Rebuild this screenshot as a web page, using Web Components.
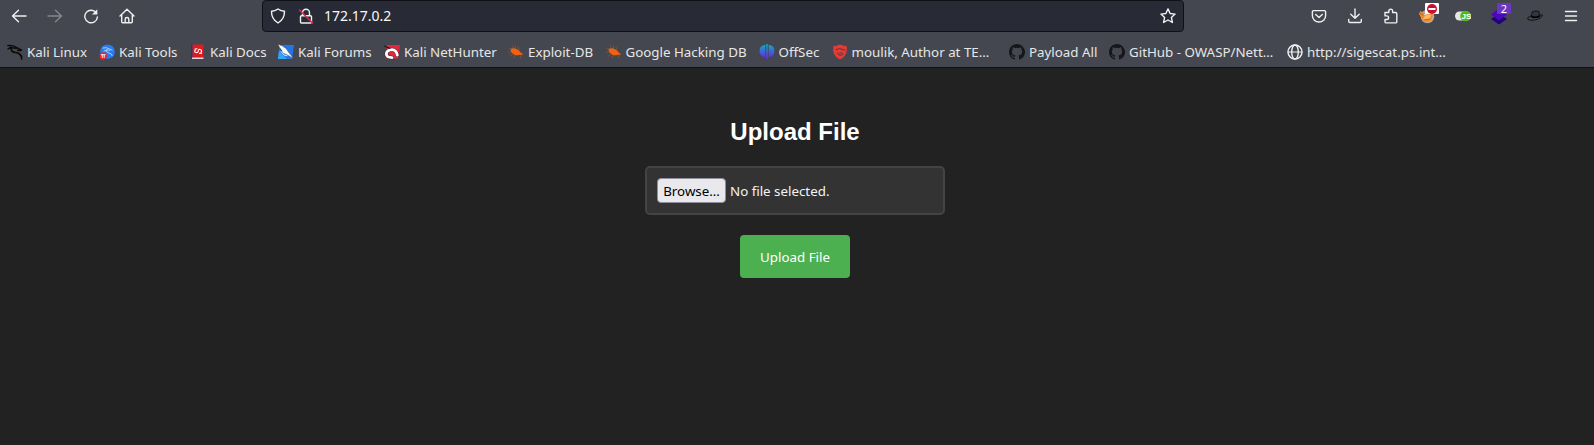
<!DOCTYPE html>
<html lang="en"><head><meta charset="utf-8"><title>Upload File</title>
<style>
html,body{margin:0;height:100%;background:#222;overflow:hidden}
body{font-family:"Noto Sans",sans-serif;font-size:13.333px;color:#e6e6e6}
</style></head><body>
<browser-window></browser-window>
<script>
const S=(w,h,b,vb)=>`<svg width="${w}" height="${h}" viewBox="${vb||`0 0 ${w} ${h}`}" fill="none" stroke="#f0f0f1" stroke-width="1.4" stroke-linecap="round" stroke-linejoin="round">${b}</svg>`;
const bug=S(16,16,'<g stroke="#b85a2a" stroke-width=".5"><path d="M4 1.500l2 3M7.500 2v3M1 4.500l4 1.500M.5 8h4M2.500 12l3-2.500M6 13.500l2-3M10 3l1 2.500M12.500 13.500l.5-3.500M15 10l-3-1"/></g><path d="M2.500 5Q5 3.700 8.500 5Q12 6.500 12.700 8.500l2.300 2.300-3-.1Q8 12.300 5 9.800Q2.500 8 2.500 5z" fill="#f0620f" stroke="none"/>');
const cat=S(16,16,'<path fill="#16171a" stroke="none" fill-rule="evenodd" d="M8 0C3.580 0 0 3.580 0 8c0 3.540 2.290 6.530 5.470 7.590.4.070.55-.17.55-.38 0-.19-.01-.82-.01-1.490-2.010.37-2.530-.49-2.690-.94-.09-.23-.48-.94-.82-1.130-.28-.15-.68-.52-.01-.53.63-.01 1.080.58 1.230.82.72 1.210 1.870.87 2.330.66.07-.52.28-.87.51-1.070-1.780-.2-3.640-.89-3.640-3.950 0-.87.31-1.590.82-2.150-.08-.2-.36-1.020.08-2.120 0 0 .67-.21 2.200.82a7.600 7.600 0 0 1 4 0c1.530-1.040 2.200-.82 2.200-.82.44 1.100.16 1.920.08 2.120.51.56.82 1.270.82 2.150 0 3.070-1.870 3.750-3.650 3.950.29.25.54.73.54 1.480 0 1.070-.01 1.930-.01 2.200 0 .21.15.46.55.38A8 8 0 0 0 8 0z"/>');
const ICONS={
back:S(16,16,'<path d="M15 8H1.500M7.500 2.300L1.500 8l6 5.700"/>'),
fwd:S(16,16,'<path stroke="#85868c" d="M1 8h13.500M8.500 2.300l6 5.700-6 5.700"/>'),
reload:S(16,16,'<path d="M13.500 5.200A6.300 6.300 0 1 0 14.400 9"/><path d="M14.300 1.200v5.300H9z" fill="#f0f0f1" stroke="none"/>'),
home:S(16,16,'<path d="M1 8L8 1.300 15 8M2.700 6.800v7q0 1 1 1h8.600q1 0 1-1v-7M6.200 14.700v-3.500q0-1.700 1.800-1.700t1.800 1.700v3.500"/>'),
shield:S(16,16,'<path d="M8 1Q11 3 14.500 3.300Q14.700 11 8 15Q1.300 11 1.500 3.300Q5 3 8 1z"/>'),
lock:S(16,16,'<path d="M4.500 7.500V4.700a3.500 3.500 0 0 1 7 0v2.800M3.500 7.700h9q1 0 1 1v5.300q0 1-1 1h-9q-1 0-1-1V8.700q0-1 1-1z"/><path stroke="#e22850" stroke-width="1.500" d="M1.500 2L14.500 15"/>'),
star:S(16,16,'<path d="M8 .9l2.100 4.600 5 .6-3.700 3.400 1 5L8 12l-4.400 2.500 1-5L.9 6.100l5-.6z"/>'),
pocket:S(16,16,'<path d="M2.500 2.600h11q1.100 0 1.100 1.100v4a6.600 6.300 0 0 1-13.200 0v-4q0-1.100 1.100-1.100z"/><path d="M4.700 6.500L8 9.500l3.300-3"/>'),
down:S(16,16,'<path d="M8 1v9.200M3.800 6.300L8 10.300l4.200-4M1.700 11.500v1.700q0 1.300 1.300 1.300h10q1.300 0 1.300-1.300v-1.700"/>'),
puzzle:S(16,16,'<path d="M2 4.500h3.800V3a1.900 1.900 0 0 1 3.800 0v1.500h3q1.200 0 1.200 1.200v8q0 1.200-1.200 1.200H3.200q-1.200 0-1.200-1.200v-2.200h1.800a1.800 1.800 0 0 0 0-3.600H2z"/>'),
fox:S(16,16,'<circle cx="8.500" cy="8.500" r="6.800" fill="#b5aaa2" stroke="none"/><path d="M1 3l4 2 5-2 4 4-2 6q-4 2.500-8-.5L0 6z" fill="#f58b20" stroke="none"/><path d="M4 11.500l2-4 6-1-1.500 5-5 1z" fill="#ffb964" stroke="none"/><path d="M.5 4.500l3.500 2.500M5 12l5.500-1" stroke="#7d5a45" stroke-width=".8"/><path d="M5.500 6.500l5-1" stroke="#ddd" stroke-width="1"/>'),
js:S(16,12,'<rect y="1.500" width="16" height="9" rx="4.500" fill="#e5e5e5" stroke="none"/><circle cx="10.500" cy="6" r="5.300" fill="#4cbd12" stroke="none"/><text x="6.500" y="9" font-family="Liberation Sans" font-size="8" font-weight="700" fill="#fff" stroke="none">JS</text>'),
layers:S(16,18,'<path d="M0 12l8-5 8 5-8 5.500z" fill="#22007a" stroke="none"/><path d="M0 7.500l8-6 8 6-8 6z" fill="#4b08b8" stroke="none"/>'),
hat:S(16,12,'<path d="M4.500 6.500L5 2q3-2 7-.5l.7 5z" fill="#34363b" stroke="#0b0b0c" stroke-width=".8"/><path d="M4.500 5.500Q8 8 12.700 5l.1 2Q9 9 4.300 7.500z" fill="#000" stroke="none"/><path d="M4.500 5.500Q0 7.300.6 9q2 2 8 .8 6-1.400 7-4.800-1-.7-3 .3" stroke="#0b0b0c" stroke-width=".9"/>'),
menu:S(14,12,'<path d="M1.500 1.500h11M1.500 6h11M1.500 10.500h11"/>'),
kali:S(16,16,'<g stroke="#0a0a0b"><path stroke-width="1.100" d="M.5 1.500Q6 .8 9.500 3.500M.8 5Q5 3 9.500 4.500M2 3l4 .5"/><path stroke-width="1.700" d="M4.500 4.300Q3.500 8 8 8.400q4.600.3 6.500 4.300"/><path stroke-width="1.400" d="M8.500 3.500q3 .3 4 1.700l2 .8-1.500.6q-1-.5-2.300-.4M14.300 12l.4 3.200"/></g>'),
tools:S(16,16,'<circle cx="8.500" cy="7.700" r="7.300" fill="#287cf2" stroke="none"/><path stroke="#bcd8ff" stroke-width=".9" d="M4 4q4-1 6 .8l3 1.300M5 7q3.500-2 5.500-.8M7.500 6q-.6 2.600 2 2.800 3 .4 3.800 2.900"/><circle cx="4.200" cy="12" r="3.700" fill="#e6252c" stroke="none"/><path stroke="#fff" stroke-width=".9" d="M2.200 10.700h4M3.300 11v2.500M5.200 11v2.500"/>'),
docs:S(16,16,'<path d="M2 .5h11.500v13H2z" fill="#dc1c20" stroke="none"/><path d="M1 .5h1.500V15H1z" fill="#263878" stroke="none"/><path d="M2 13.500h11.500V15H2z" fill="#ddd" stroke="none"/><path d="M5.500 5.500q-1.800 2.500.5 3t2.200-1.500 2-1.500.8 3.500M5 5l2-.3M11.500 9.200l-2 .2" stroke="#fff" stroke-width="1.100"/>'),
forums:S(16,16,'<path d="M1.500 1H16l-2 14H0z" fill="#2376e4" stroke="none"/><path d="M0 15l1-8 8 8z" fill="#35a6f3" stroke="none"/><path d="M0 .3L4.500 2l4 3 2.300 3.500 4.500 5.800-6-3.300-4.500-2L2.500 5z" fill="#f8f8f8" stroke="#39434c" stroke-width=".4"/><path d="M3 7.500l3 3.500 3 .8" stroke="#dcecff" stroke-width="1"/><path d="M2 4.500l2 2.500" stroke="#222" stroke-width=".6"/>'),
net:S(16,16,'<path d="M3 1h13l-1.500 13.500H1z" fill="#e8253a" stroke="none"/><path d="M13.300 11Q12.500 6 8 5.600Q2.500 6 2.300 10Q2.600 13.500 8 13.600" stroke="#39222a" stroke-width="3.800"/><path d="M13.300 11Q12.500 6 8 5.600Q2.500 6 2.300 10Q2.600 13.500 8 13.600" stroke="#fff" stroke-width="2.900"/><path d="M.8 2.200l5 2" stroke="#181818" stroke-width="1.200"/><path d="M7 8.300l4 1.500-2 1.700-4-1z" fill="#e8253a" stroke="none"/>'),
bug,cat,
offsec:S(16,16,'<defs><linearGradient id="g" x2="0" y2="1"><stop stop-color="#10a9c4"/><stop offset="1" stop-color="#652be0"/></linearGradient></defs><g fill="url(#g)" stroke="none"><path d="M6.300.8v12.600Q.5 12.500.5 7T6.300.8zM9.700.8v12.600Q15.500 12.500 15.500 7T9.700.8z"/><path d="M7.200 0h1.600v15H7.200z"/></g>'),
moulik:S(16,16,'<path d="M8 .5Q12 2 14.800 2.200 16 12 8 15.500 0 12 1.200 2.200 4 2 8 .5z" fill="#e63b35" stroke="none"/><path d="M4 5.500q4-2 7 .2l2 .5M5.500 9q.5 2.800 3.500 2.300 2.600-.7 1.600-2-1-.8-3-.3" stroke="#57393e" stroke-width="1"/>'),
globe:S(16,16,'<circle cx="8" cy="8" r="7"/><ellipse cx="8" cy="8" rx="3.300" ry="7"/><path d="M1 8h14" stroke-width="1.200"/>')
};
const define=(n,html)=>customElements.define(n,class extends HTMLElement{
 constructor(){super();this.attachShadow({mode:'open'}).innerHTML=html}});
customElements.define('ui-icon',class extends HTMLElement{
 constructor(){super();this.attachShadow({mode:'open'})}
 connectedCallback(){this.shadowRoot.innerHTML='<style>:host{display:flex;flex:none;align-items:center;justify-content:center;width:16px;height:18px}svg{display:block;flex:none}</style>'+ICONS[this.getAttribute('name')]}});
customElements.define('tool-button',class extends HTMLElement{
 constructor(){super();this.attachShadow({mode:'open'})}
 connectedCallback(){this.shadowRoot.innerHTML=`<style>:host{display:flex;flex:none;justify-content:center;align-items:center;position:relative;width:36px;height:32px}
 ::slotted(span){position:absolute;box-sizing:border-box;left:16px;top:3px;width:14px;height:11px;border-radius:1px;display:flex;align-items:center;justify-content:center;font-size:10px;line-height:11px}</style><ui-icon name="${this.getAttribute('icon')}"></ui-icon><slot></slot>`}});
define('address-bar',`<style>:host{display:flex;box-sizing:border-box;align-items:center;width:922px;height:32px;border:1px solid #101116;border-radius:4px;background:#282a36;padding:0 7px 0 7px;color:#f8f8f8;font-size:14px}
.a{margin-right:12px}.u{flex:1;margin-left:10px;padding-bottom:2px}</style><ui-icon class="a" name="shield"></ui-icon><ui-icon name="lock"></ui-icon><span class="u"><slot></slot></span><ui-icon name="star"></ui-icon>`);
define('nav-bar',`<style>:host{display:flex;height:32px;align-items:center;padding-left:1px;padding-right:5px}
address-bar{margin-left:117px}.sp{flex:1}.no{background:#fff}.no svg{display:block}.two{background:#6c37c0;color:#fff;font-size:11px}</style>
<tool-button icon="back"></tool-button><tool-button icon="fwd"></tool-button><tool-button icon="reload"></tool-button><tool-button icon="home"></tool-button>
<address-bar>172.17.0.2</address-bar><div class="sp"></div>
<tool-button icon="pocket"></tool-button><tool-button icon="down"></tool-button><tool-button icon="puzzle"></tool-button>
<tool-button icon="fox"><span class="no"><svg width="10" height="10"><circle cx="5" cy="5" r="5" fill="#c8102e"/><path d="M1.500 5h7" stroke="#fff" stroke-width="2"/></svg></span></tool-button>
<tool-button icon="js"></tool-button><tool-button icon="layers"><span class="two">2</span></tool-button><tool-button icon="hat"></tool-button><tool-button icon="menu"></tool-button>`);
customElements.define('book-mark',class extends HTMLElement{
 constructor(){super();this.attachShadow({mode:'open'})}
 connectedCallback(){this.shadowRoot.innerHTML=`<style>:host{display:flex;flex:none;align-items:center;gap:4px;width:${this.getAttribute('w')}px;white-space:nowrap;line-height:18px}</style><ui-icon name="${this.getAttribute('icon')}"></ui-icon><span><slot></slot></span>`}});
define('bookmarks-bar',`<style>:host{display:flex;height:35px;box-sizing:border-box;padding:3px 0 0 7px;align-items:center;border-bottom:1px solid #101114;overflow:hidden}</style>
<book-mark icon="kali" w="92">Kali Linux</book-mark><book-mark icon="tools" w="91">Kali Tools</book-mark><book-mark icon="docs" w="88">Kali Docs</book-mark><book-mark icon="forums" w="106">Kali Forums</book-mark><book-mark icon="net" w="124">Kali NetHunter</book-mark><book-mark icon="bug" w="97.500">Exploit-DB</book-mark><book-mark icon="bug" w="153">Google Hacking DB</book-mark><book-mark icon="offsec" w="73">OffSec</book-mark><book-mark icon="moulik" w="177.500">moulik, Author at TE…</book-mark><book-mark icon="cat" w="100">Payload All</book-mark><book-mark icon="cat" w="178">GitHub - OWASP/Nett…</book-mark><book-mark icon="globe" w="170">http://sigescat.ps.int…</book-mark>`);
define('file-picker',`<style>:host{display:flex;box-sizing:border-box;align-items:center;width:300px;height:49px;border:2px solid #444;border-radius:5px;background:#333;padding:0 10px;color:#f3f3f3}
button{box-sizing:border-box;width:69px;height:25px;padding:0;margin:0 4px 0 0;border:1px solid #8f8f9d;border-radius:4px;background:#e9e9ed;color:#000;font:inherit;line-height:18px}</style><button>Browse…</button><span><slot></slot></span>`);
define('submit-button',`<style>:host{display:block}button{display:block;width:110px;height:43px;padding:0;border:0;border-radius:4px;background:#4caf50;color:#fff;font:inherit}</style><button><slot></slot></button>`);
define('upload-page',`<style>:host{display:flex;flex:1;box-sizing:border-box;flex-direction:column;align-items:center;padding:50px 4px 0 0;background:#222;border-bottom:1px solid #2c1f26}
h2{margin:0 0 20px;font:bold 24px/28px "Liberation Sans",sans-serif;color:#fff}file-picker{margin-bottom:20px}</style>
<h2>Upload File</h2><file-picker>No file selected.</file-picker><submit-button>Upload File</submit-button>`);
define('browser-window',`<style>:host{display:flex;flex-direction:column;height:100vh}header{background:#44474f;height:68px;flex:none;display:flex;flex-direction:column;justify-content:space-between}</style><header><nav-bar></nav-bar><bookmarks-bar></bookmarks-bar></header><upload-page></upload-page>`);
</script></body></html>
